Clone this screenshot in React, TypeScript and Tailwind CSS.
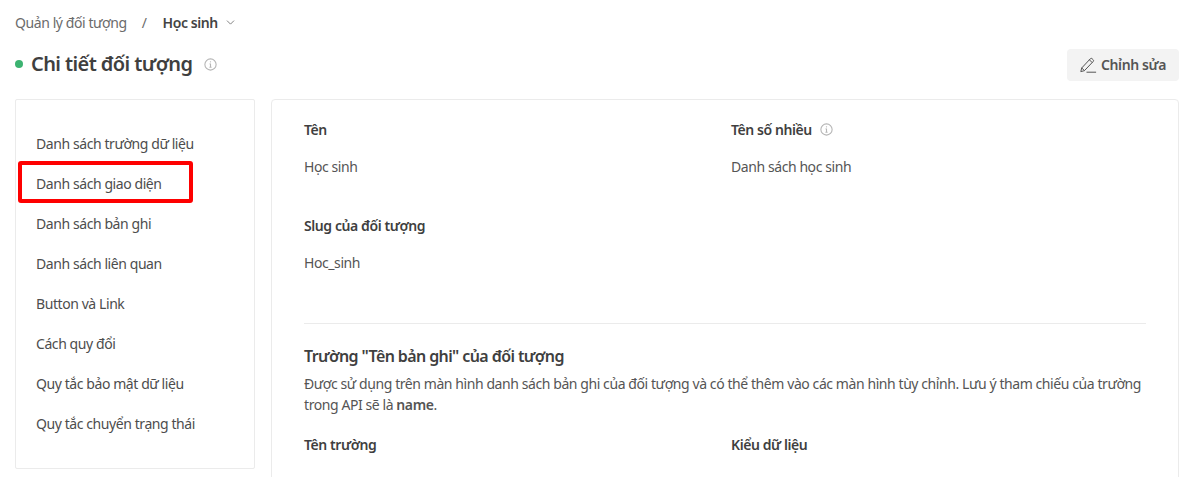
import { ChevronDown } from 'lucide-react';

const menuItems = [
  'Danh sách trường dữ liệu',
  'Danh sách giao diện',
  'Danh sách bản ghi',
  'Danh sách liên quan',
  'Button và Link',
  'Cách quy đổi',
  'Quy tắc bảo mật dữ liệu',
  'Quy tắc chuyển trạng thái',
];

function InfoIcon({ className }: { className?: string }) {
  return (
    <svg viewBox="0 0 12 12" className={className} fill="none" stroke="currentColor">
      <circle cx="6" cy="6" r="5.2" strokeWidth="1" />
      <path d="M6 5.4v3M5 8.6h2M5.2 5.4H6" strokeWidth="1" />
      <circle cx="6" cy="3.5" r="0.6" fill="currentColor" stroke="none" />
    </svg>
  );
}

function EditIcon({ className }: { className?: string }) {
  return (
    <svg viewBox="0 0 17 16" className={className} fill="none" stroke="currentColor" strokeWidth="1" strokeLinejoin="round">
      <path d="M0.8 14.6l0.9-3.6 8.6-9.2a1.3 1.3 0 0 1 1.9 0l0.9 0.9a1.3 1.3 0 0 1 0 1.9l-8.7 9.1z" />
      <path d="M9.4 2.8l2.8 2.8M1.7 11l2.8 2.6" />
      <path d="M6.5 15.2h9.6" />
    </svg>
  );
}

function Field({ label, value, info }: { label: string; value: string; info?: boolean }) {
  return (
    <div className="h-[96px]">
      <div className="flex items-center gap-2 h-[20px] text-[14px] font-semibold text-[#3f3f3f]">
        {label}
        {info && <InfoIcon className="w-[13px] h-[13px] text-[#b5b5b5]" />}
      </div>
      <div className="mt-[18px] h-[20px] text-[14px] leading-[20px] text-[#555555]">{value}</div>
    </div>
  );
}

export default function App() {
  return (
    <div className="h-[477px] overflow-hidden bg-white pl-[15px] pr-[13px] tracking-[-0.42px] font-['Noto_Sans',sans-serif] text-[#444444]">
      {/* Breadcrumb */}
      <div className="flex items-center h-[20px] mt-[12px] text-[14px]">
        <span className="text-[#6b6b6b]">Quản lý đối tượng</span>
        <span className="ml-[15px] text-[#6b6b6b]">/</span>
        <span className="ml-[16px] font-semibold text-[#444444]">Học sinh</span>
        <ChevronDown className="ml-[6px] mt-[1px] w-[13px] h-[13px] stroke-[1.5] text-[#666666]" />
      </div>

      {/* Header */}
      <div className="flex items-center justify-between mt-[17px] h-[32px]">
        <div className="flex items-center pb-[2px]">
          <span className="w-[8px] h-[8px] rounded-full bg-[#3cb371]" />
          <h1 className="ml-[8px] text-[20px] font-semibold tracking-[-0.6px] text-[#3f3f3f]">Chi tiết đối tượng</h1>
          <InfoIcon className="ml-[12px] w-[13px] h-[13px] text-[#b5b5b5]" />
        </div>
        <button className="flex items-center justify-center gap-[4px] w-[112px] h-[32px] pb-[2px] rounded-[4px] bg-[#f3f3f3] text-[14px] font-semibold text-[#555555]">
          <EditIcon className="w-[17px] h-[16px] mt-[2px]" />
          Chỉnh sửa
        </button>
      </div>

      <div className="flex gap-[16px] mt-[18px] items-start">
        {/* Side menu */}
        <div className="relative w-[240px] h-[370px] shrink-0 border border-[#ebebeb] rounded-[2px] pt-[23px]">
          {menuItems.map((item) => (
            <div key={item} className="h-[40px] pl-[20px] flex items-center text-[14px] text-[#4d4d4d]">
              {item}
            </div>
          ))}
          <div className="absolute left-[2px] top-[61px] w-[175px] h-[42px] border-[4px] border-[#fe0000] rounded-[3px]" />
        </div>

        {/* Details */}
        <div className="flex-1 h-[400px] border border-[#ebebeb] rounded-[4px] px-[32px] pt-[19px]">
          <div className="grid grid-cols-[427px_1fr]">
            <Field label="Tên" value="Học sinh" />
            <Field label="Tên số nhiều" value="Danh sách học sinh" info />
            <Field label="Slug của đối tượng" value="Hoc_sinh" />
          </div>
          <div className="border-t border-[#ebebeb] mt-[12px]" />
          <h2 className="mt-[22px] text-[16px] leading-[20px] font-semibold tracking-[-0.6px] text-[#3f3f3f]">
            Trường "Tên bản ghi" của đối tượng
          </h2>
          <p className="mt-[7px] text-[14px] leading-[21px] text-[#555555]">
            Được sử dụng trên màn hình danh sách bản ghi của đối tượng và có thể thêm vào các màn hình tùy chỉnh. Lưu ý tham chiếu của trường
            <br />
            trong API sẽ là <b className="font-semibold">name</b>.
          </p>
          <div className="grid grid-cols-[427px_1fr] mt-[20px]">
            <div className="text-[14px] leading-[20px] font-semibold text-[#3f3f3f]">Tên trường</div>
            <div className="text-[14px] leading-[20px] font-semibold text-[#3f3f3f]">Kiểu dữ liệu</div>
          </div>
        </div>
      </div>
    </div>
  );
}
